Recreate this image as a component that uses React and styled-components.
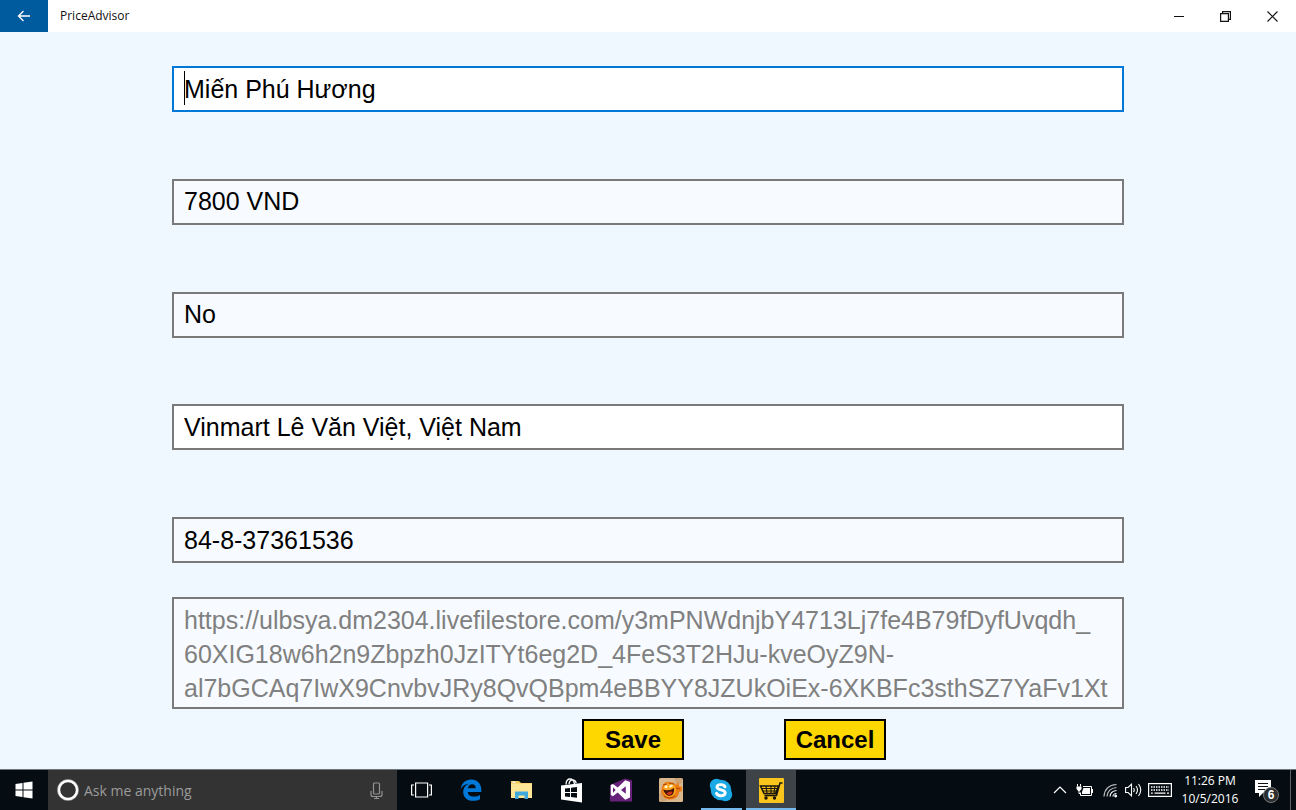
import React from "react";
import styled, { createGlobalStyle } from "styled-components";

const formFont = '"Liberation Sans", Arial, sans-serif';
const uiFont = '"Segoe UI", "Open Sans", "Noto Sans", sans-serif';

const GlobalStyle = createGlobalStyle`
  *, *::before, *::after { box-sizing: border-box; }
  body { margin: 0; background: #eff7ff; }
  button, input, textarea { margin: 0; border-radius: 0; }
  svg { display: block; }
`;

const Page = styled.div`
  min-height: 100vh;
  display: flex;
  flex-direction: column;
  font-family: ${uiFont};
`;

const TitleBar = styled.header`
  display: flex;
  height: 32px;
  background: #fff;
`;

const BackButton = styled.button`
  width: 48px;
  border: 0;
  padding: 0;
  display: grid;
  place-items: center;
  background: #005a9e;
  color: #fff;
`;

const Title = styled.h1`
  flex: 1;
  margin: 0;
  padding-left: 12px;
  font-size: 12px;
  font-weight: 400;
  line-height: 32px;
  color: #111;
`;

const WindowButton = styled.button`
  width: 47px;
  border: 0;
  padding: 0;
  display: grid;
  place-items: center;
  background: transparent;
  color: #111;
`;

const Form = styled.form`
  flex: 1;
  padding: 34px 172px 9px;
  display: flex;
  flex-direction: column;
`;

const FieldList = styled.div`
  flex: 1;
  display: flex;
  flex-direction: column;
  justify-content: space-between;
  gap: 24px;
  margin-bottom: 34px;
`;

const Field = styled.div`
  position: relative;
  display: flex;
`;

const fieldColor = ({ $focused, $readOnly }) => ({
  border: $focused ? "#0078d7" : "#7a7a7a",
  fill: $readOnly ? "#f7fbff" : "#fff",
});

const TextInput = styled.input`
  flex: 1;
  min-width: 0;
  height: 46px;
  padding: 0 10px;
  border: 2px solid ${(p) => fieldColor(p).border};
  background: ${(p) => fieldColor(p).fill};
  color: #000;
  font-family: ${formFont};
  font-size: 25px;
  outline: none;
`;

const Caret = styled.span`
  position: absolute;
  left: 12px;
  top: 5px;
  width: 1px;
  height: 34px;
  background: #000;
`;

const UrlBox = styled.textarea`
  height: 112px;
  padding: 4px 10px 0;
  border: 2px solid #7a7a7a;
  background: #f7fbff;
  color: #808080;
  font-family: ${formFont};
  font-size: 25px;
  line-height: 34px;
  white-space: pre;
  overflow: hidden;
  resize: none;
  outline: none;
`;

const Actions = styled.div`
  display: flex;
  justify-content: center;
  gap: 100px;
  padding-left: 172px;
  margin-top: 10px;
`;

const ActionButton = styled.button`
  width: 102px;
  height: 41px;
  padding: 0;
  border: 2px solid #000;
  background: #ffd700;
  color: #000;
  font: bold 24px "Liberation Sans", Arial, sans-serif;
`;

const Taskbar = styled.footer`
  display: flex;
  height: 41px;
  border-top: 1px solid #70777c;
  background: #050d12;
  color: #fff;
`;

const TaskButton = styled.button`
  width: ${(p) => p.$width || 50}px;
  padding: 0;
  border: 0;
  display: grid;
  place-items: center;
  background: ${(p) => (p.$active ? "#3e4347" : "transparent")};
  color: #fff;
  box-shadow: ${(p) => (p.$active ? "inset 0 -2px #76b9ed" : "none")};
`;

const RunningButton = styled(TaskButton)`
  background: linear-gradient(#76b9ed, #76b9ed) bottom / 41px 2px no-repeat;
`;

const Search = styled.label`
  width: 349px;
  padding: 0 12px 0 9px;
  display: flex;
  align-items: center;
  gap: 4px;
  background: #333;
`;

const SearchInput = styled.input`
  flex: 1;
  min-width: 0;
  padding: 0;
  border: 0;
  outline: none;
  background: transparent;
  color: #fff;
  font: 14px ${uiFont};
  &::placeholder { color: #9b9b9b; opacity: 1; }
`;

const Tray = styled.div`
  display: flex;
  margin-left: auto;
`;

const Clock = styled.time`
  width: 68px;
  padding-top: 2px;
  font-size: 12px;
  line-height: 18px;
  text-align: center;
`;

const ShowDesktop = styled.button`
  width: 6px;
  border: 0;
  border-left: 1px solid #5c6266;
  padding: 0;
  background: transparent;
`;

const BackIcon = () => (
  <svg width="14" height="12" viewBox="0 0 14 12" fill="none" stroke="currentColor" strokeWidth="1.3">
    <path d="M13 6H1.5M6.5 1L1.5 6l5 5" />
  </svg>
);

const MinimizeIcon = () => (
  <svg width="10" height="10" viewBox="0 0 10 10" fill="none" stroke="currentColor">
    <path d="M0 5.5h10" />
  </svg>
);

const RestoreIcon = () => (
  <svg width="11" height="11" viewBox="0 0 11 11" fill="none" stroke="currentColor" strokeWidth="1.2">
    <path d="M.6 2.6h7.8v7.8H.6zM2.6 2.6v-2h7.8v7.8h-2" />
  </svg>
);

const CloseIcon = () => (
  <svg width="11" height="11" viewBox="0 0 11 11" fill="none" stroke="currentColor" strokeWidth="1.1">
    <path d="M.5 .5l10 10M10.5 .5l-10 10" />
  </svg>
);

const WindowsIcon = () => (
  <svg width="18" height="18" viewBox="0 0 18 18" fill="#fff">
    <path d="M.5 3L7.5 2v6.5h-7zM8.5 1.8L17.5 .5v8h-9zM.5 9.5h7V16l-7-1zM8.5 9.5h9v8l-9-1.3z" />
  </svg>
);

const CortanaIcon = () => (
  <svg width="23" height="24" viewBox="0 0 23 24" fill="none">
    <circle cx="11" cy="12" r="9.2" stroke="#fff" strokeWidth="2.8" />
    <circle cx="11" cy="12" r="10.7" stroke="#888" strokeWidth=".6" />
  </svg>
);

const MicIcon = () => (
  <svg width="17" height="19" viewBox="0 0 17 19" fill="none" stroke="#929292" strokeWidth="1.2">
    <rect x="5.5" y="2" width="6" height="11" rx="1" />
    <path d="M3 10v3.5q0 2 2 2h7q2 0 2-2V10M8.5 15.500V17.5M6 17.5h5" />
  </svg>
);

const TaskViewIcon = () => (
  <svg width="21" height="16" viewBox="0 0 21 16" fill="none" stroke="#fff" strokeWidth="1.2">
    <path d="M4.600 1h12v14h-12zM3 3H.6v10H3M18 3h2.400v10H18" />
  </svg>
);

const EdgeIcon = () => (
  <svg width="22" height="22" viewBox="0 0 22 22" fill="#0078d7">
    <path d="M.8 9.800C1.500 4.200 5.500.5 11.200.5 17.700.5 21.300 5 21.300 10.800v2.100H7.800c.1 3.200 3 4.700 6.300 4.700 2.100 0 4.200-.6 5.900-1.600v4.300c-2 1-4.300 1.500-6.800 1.500-6.300 0-10-3.600-10-8.800 0-3.600 2-6.700 5.400-8.200-3.300.3-6 2.100-7.800 5zm7.100-.6h7.800c0-2.500-1.300-4-3.600-4-2.300 0-3.800 1.500-4.200 4z" />
  </svg>
);

const FolderIcon = () => (
  <svg width="23" height="20" viewBox="0 0 23 20">
    <path fill="#f0c75a" d="M1 1h8l2 2h11v6H1z" />
    <path fill="#ffe596" d="M1 3.500h21V18H1z" />
    <path fill="#3fa9dc" d="M5 19v-7.500h13V19h-3.500v-3.500h-6V19z" />
    <path fill="#fff" d="M2.500 1.500h3v1.300h-3z" />
  </svg>
);

const StoreIcon = () => (
  <svg width="23" height="25" viewBox="0 0 23 25">
    <path fill="none" stroke="#fff" strokeWidth="1.3" d="M6 6.500C6 2.500 8 1 10 1s4 2 4.500 5M9 6c.3-3 2-4.300 4-4.100 2 .2 3 1.600 3.200 3.500" />
    <path fill="#fff" d="M1 7.500L22 5v19.500L1 21.500z" />
    <path fill="#050d12" d="M5 10.500l5-.6v4H5zM11 9.800l6-.7v4.800h-6zM5 14.900h5v4l-5-.5zM11 14.900h6v4.800l-6-.7z" />
  </svg>
);

const VisualStudioIcon = () => (
  <svg width="24" height="24" viewBox="0 0 24 24">
    <path fill="#68217a" d="M16 .5L23 2.500V23.500H1V7z" />
    <path fill="#fff" fillRule="evenodd" d="M16.200 2.200L21 4v15.500l-4.800 2.200-7.500-7.200-4.800 3.700L1.800 17V7l2.100-1.100 4.800 3.700zM16.800 8.200L12 12l4.800 3.700zM4 9.200v5.600L6.700 12z" />
  </svg>
);

const GameIcon = () => (
  <svg width="24" height="24" viewBox="0 0 24 24">
    <rect width="24" height="24" rx="1.5" fill="#d8b78d" />
    <path fill="#cda477" d="M0 16l5-3 3 9-4 2H1zM15 0h8v5l-5 2z" />
    <path fill="#ed7c14" d="M3 9Q5 3 11 4q4 0 6 3l2-3 1 4 3 1v4l-3 1-1 4q-5 5-11 3-5-2-6-7z" />
    <ellipse cx="10.500" cy="12" rx="6.500" ry="7" fill="#ffa41e" />
    <path fill="#4b160a" d="M4 11.500q6 2 11-1.500 1 7-5 8-4-1-6-6.500z" />
    <path fill="#d8351b" d="M7.500 15.500q4-3 6-1.500-1 3-4 3z" />
    <path fill="#fff3c4" d="M5 9l2-2 2 1.500-1.500 2zM10 8l3-2 1 2-3 2z" />
    <path stroke="#a84507" fill="none" d="M4 7l4-1M10 5.500l5 .5M17 10l4 1M5 18q5 4 11 0" />
  </svg>
);

const SkypeIcon = () => (
  <svg width="24" height="24" viewBox="0 0 24 24">
    <circle cx="7.500" cy="7.500" r="6.700" fill="#1ba9e6" />
    <circle cx="16.500" cy="16.500" r="6.700" fill="#1ba9e6" />
    <circle cx="12" cy="12" r="10.300" fill="#1ba9e6" />
    <path fill="none" stroke="#fff" strokeWidth="2.900" strokeLinecap="round" d="M16 8.800C15 6 8.200 5.700 8 9c-.1 3.800 8.200 1.900 8.200 5.800 0 3.700-7.500 3.900-8.700.5" />
  </svg>
);

const CartIcon = () => (
  <svg width="25" height="25" viewBox="0 0 25 25">
    <rect width="25" height="25" rx="1" fill="#f9c51c" />
    <g fill="none" stroke="#17150b" strokeWidth="1.5">
      <path d="M23.500 5H21l-3.500 12.500H5.500M1.500 8h18l-3 7.500H5z" />
      <path strokeWidth="1.1" d="M3 10.500h16M4 13h14M7 8l1 7M12 8v7M16 8l-1 7" />
    </g>
    <circle cx="7" cy="20" r="1.700" fill="#17150b" />
    <circle cx="15.500" cy="20" r="1.700" fill="#17150b" />
  </svg>
);

const ChevronIcon = () => (
  <svg width="14" height="8" viewBox="0 0 14 8" fill="none" stroke="#fff" strokeWidth="1.2">
    <path d="M1 7l6-6 6 6" />
  </svg>
);

const BatteryIcon = () => (
  <svg width="18" height="14" viewBox="0 0 18 14" fill="none" stroke="#fff">
    <path d="M7 3.500h8.500V12.500h-11V9.500M16.500 6v4" />
    <path fill="#fff" stroke="none" d="M7.500 5h6.500v6h-8V9z" />
    <path d="M1.500 1v2.500M4.500 1v2.500M3 7v3.500h2" />
    <path fill="#fff" stroke="none" d="M.5 3.500h5v2.500L3.800 8H2.200L.5 6z" />
  </svg>
);

const WifiIcon = () => (
  <svg width="15" height="15" viewBox="0 0 15 15" fill="none" stroke="#fff">
    <path strokeWidth="1.2" stroke="#b7babc" d="M1 13.500C1.500 6.500 6 2 13.500 1.500M4 13.500C4.500 8.500 8 5 13.500 4.500" />
    <path strokeWidth="1.2" d="M7 13.500C7.200 10.500 9.500 8 13.500 7.500M10 13.500C10 12 11.500 10.500 13.500 10.500" />
    <circle cx="12.700" cy="13" r="1" fill="#fff" />
  </svg>
);

const SpeakerIcon = () => (
  <svg width="17" height="14" viewBox="0 0 17 14" fill="none" stroke="#fff" strokeWidth="1.1">
    <path d="M.6 4.500h2.500L6.500 1.200v11.600L3.100 9.500H.6zM8.500 5q1.500 2 0 4M11 3q3 4 0 8M13.500 1q4.500 6 0 12" />
  </svg>
);

const KeyboardIcon = () => (
  <svg width="24" height="14" viewBox="0 0 24 14" fill="none" stroke="#fff">
    <rect x=".6" y=".6" width="22.800" height="12.800" strokeWidth="1.2" />
    <path strokeWidth="1.3" strokeDasharray="1.500 1" d="M3 4h18M3 7h18" />
    <path strokeWidth="1.3" d="M3 10.200h1.800M6.500 10.200h11M19 10.200h2" />
  </svg>
);

const NotificationIcon = () => (
  <svg width="26" height="26" viewBox="0 0 26 26">
    <path fill="#fff" d="M1 3h16v13H9l-4 4v-4H1z" />
    <path stroke="#111" strokeWidth="1.2" d="M4 6.500h10M4 9.500h10M4 12.500h7" />
    <circle cx="17" cy="18" r="7.500" fill="#2b2d2f" stroke="#777" />
    <text x="17" y="22" textAnchor="middle" fill="#fff" fontSize="12" fontWeight="600">6</text>
  </svg>
);

const fields = [
  { label: "Product name", value: "Miến Phú Hương", focused: true },
  { label: "Price", value: "7800 VND", readOnly: true },
  { label: "Promotion", value: "No", readOnly: true },
  { label: "Store", value: "Vinmart Lê Văn Việt, Việt Nam" },
  { label: "Phone", value: "84-8-37361536", readOnly: true },
];

const imageUrl = [
  "https://ulbsya.dm2304.livefilestore.com/y3mPNWdnjbY4713Lj7fe4B79fDyfUvqdh_",
  "60XIG18w6h2n9Zbpzh0JzITYt6eg2D_4FeS3T2HJu-kveOyZ9N-",
  "al7bGCAq7IwX9CnvbvJRy8QvQBpm4eBBYY8JZUkOiEx-6XKBFc3sthSZ7YaFv1Xt",
].join("\n");

const pinned = [
  { name: "Edge", Icon: EdgeIcon },
  { name: "File Explorer", Icon: FolderIcon },
  { name: "Store", Icon: StoreIcon },
  { name: "Visual Studio", Icon: VisualStudioIcon },
  { name: "Game", Icon: GameIcon },
];

const trayItems = [
  { name: "Show hidden icons", Icon: ChevronIcon, width: 24 },
  { name: "Battery", Icon: BatteryIcon, width: 26 },
  { name: "Network", Icon: WifiIcon, width: 24 },
  { name: "Volume", Icon: SpeakerIcon, width: 22 },
  { name: "Touch keyboard", Icon: KeyboardIcon, width: 32 },
];

export default function App() {
  return (
    <Page>
      <GlobalStyle />
      <TitleBar>
        <BackButton aria-label="Back"><BackIcon /></BackButton>
        <Title>PriceAdvisor</Title>
        <WindowButton aria-label="Minimize"><MinimizeIcon /></WindowButton>
        <WindowButton aria-label="Restore"><RestoreIcon /></WindowButton>
        <WindowButton aria-label="Close"><CloseIcon /></WindowButton>
      </TitleBar>

      <Form onSubmit={(e) => e.preventDefault()}>
        <FieldList>
          {fields.map((f) => (
            <Field key={f.label}>
              <TextInput
                aria-label={f.label}
                defaultValue={f.value}
                readOnly={f.readOnly}
                spellCheck={false}
                $focused={f.focused}
                $readOnly={f.readOnly}
              />
              {f.focused && <Caret />}
            </Field>
          ))}
        </FieldList>
        <UrlBox aria-label="Image address" readOnly spellCheck={false} defaultValue={imageUrl} />
        <Actions>
          <ActionButton type="submit">Save</ActionButton>
          <ActionButton type="button">Cancel</ActionButton>
        </Actions>
      </Form>

      <Taskbar>
        <TaskButton $width={48} aria-label="Start"><WindowsIcon /></TaskButton>
        <Search>
          <CortanaIcon />
          <SearchInput aria-label="Search" placeholder="Ask me anything" />
          <MicIcon />
        </Search>
        <TaskButton $width={49} aria-label="Task view"><TaskViewIcon /></TaskButton>
        {pinned.map(({ name, Icon }) => (
          <TaskButton key={name} aria-label={name}><Icon /></TaskButton>
        ))}
        <RunningButton aria-label="Skype"><SkypeIcon /></RunningButton>
        <TaskButton $active aria-label="PriceAdvisor"><CartIcon /></TaskButton>
        <Tray>
          {trayItems.map(({ name, Icon, width }) => (
            <TaskButton key={name} $width={width} aria-label={name}><Icon /></TaskButton>
          ))}
          <Clock>11:26 PM<br />10/5/2016</Clock>
          <TaskButton $width={46} aria-label="Notifications"><NotificationIcon /></TaskButton>
          <ShowDesktop aria-label="Show desktop" />
        </Tray>
      </Taskbar>
    </Page>
  );
}
